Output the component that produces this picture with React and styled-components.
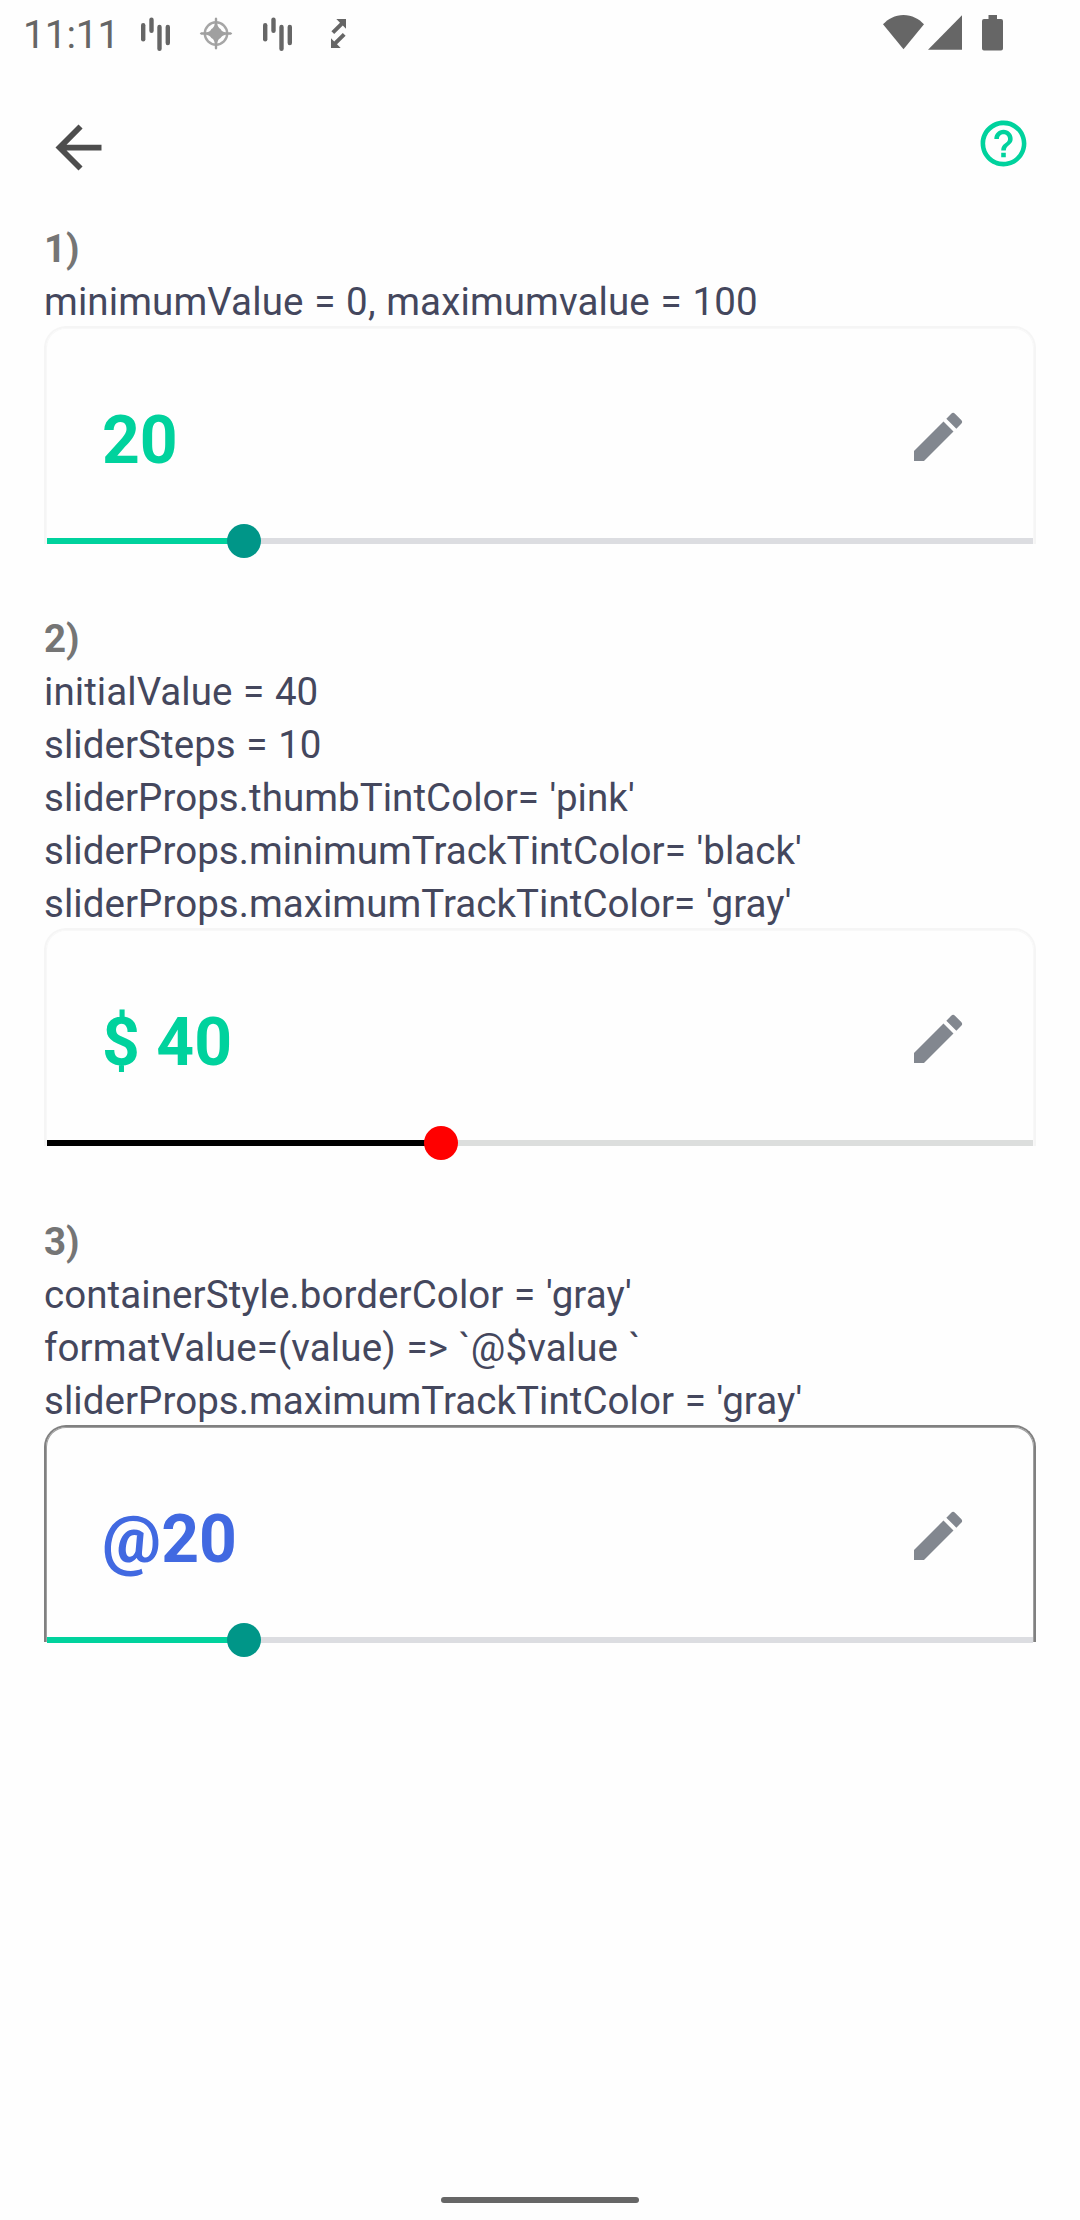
import React from "react";
import styled, { createGlobalStyle } from "styled-components";

const GlobalStyle = createGlobalStyle`
  * { box-sizing: border-box; }
  body { margin: 0; background: #fefefe; }
`;

const Screen = styled.div`
  width: 1080px;
  height: 2220px;
  display: flex;
  flex-direction: column;
  background: #fefefe;
  font-family: Roboto, "Liberation Sans", sans-serif;
  overflow: hidden;
`;

const StatusBar = styled.div`
  height: 68px;
  display: flex;
  justify-content: space-between;
  padding: 0 76px 0 22px;
`;

const StatusGroup = styled.div`
  display: flex;
  align-items: flex-start;
`;

const Clock = styled.span`
  width: 118px;
  padding-top: 11px;
  font-size: 39.4px;
  line-height: 48px;
  letter-spacing: -0.35px;
  text-indent: 1px;
  color: #666;
`;

const Glyph = styled.svg`
  display: block;
  flex: none;
  width: ${(p) => p.$w}px;
  height: ${(p) => p.$h || p.$w}px;
  margin-top: ${(p) => p.$top || 0}px;
  margin-left: ${(p) => p.$left || 0}px;
  fill: ${(p) => p.$color || "#666"};
`;

const Header = styled.header`
  height: 154px;
  display: flex;
  justify-content: space-between;
  padding: 45px 49px 0 44px;
`;

const HeaderButton = styled.button`
  display: flex;
  align-items: flex-start;
  height: 72px;
  padding: ${(p) => p.$top || 0}px 0 0;
  border: 0;
  background: none;
`;

const Content = styled.main`
  flex: 1;
  display: flex;
  flex-direction: column;
  padding: 0 44px;
`;

const Section = styled.section`
  display: flex;
  flex-direction: column;
  margin-bottom: ${(p) => p.$gap}px;
`;

const Heading = styled.div`
  font-size: 38.5px;
  line-height: 53px;
  font-weight: 700;
  color: #757575;
`;

const Line = styled.div`
  font-size: 38.5px;
  line-height: 53px;
  letter-spacing: ${(p) => p.$tracking}px;
  word-spacing: 1px;
  color: #44475d;
  white-space: pre;
`;

const Card = styled.div`
  position: relative;
  height: 218px;
  margin-top: -2px;
  display: flex;
  flex-direction: column;
`;

const CardBody = styled.div`
  height: ${(p) => p.$height}px;
  flex: none;
  display: flex;
  justify-content: space-between;
  padding: 75px 64px 0 56px;
  border: 2px solid ${(p) => p.$border};
  border-bottom: 0;
  border-radius: 22px 22px 0 0;
  box-shadow: inset 0 0 0 1px ${(p) => p.$edge};
`;

const Value = styled.div`
  font-size: 66px;
  line-height: 76px;
  font-weight: 700;
  color: ${(p) => p.$color};
`;

const Track = styled.div`
  position: absolute;
  left: 3px;
  right: 3px;
  bottom: 0;
  height: 6px;
  background: ${(p) => p.$color};
`;

const Fill = styled.div`
  width: ${(p) => p.$percent}%;
  height: 6px;
  background: ${(p) => p.$color};
`;

const Thumb = styled.div`
  position: absolute;
  left: calc(${(p) => p.$percent}% - 17px);
  top: -14px;
  width: 34px;
  height: 34px;
  border-radius: 50%;
  background: ${(p) => p.$color};
`;

const HomeArea = styled.footer`
  height: 23px;
  display: flex;
  justify-content: center;
`;

const HomeBar = styled.div`
  width: 198px;
  height: 6px;
  border-radius: 3px;
  background: #666;
`;

const Bars = ({ left }) => (
  <Glyph $w={30} $h={68} $left={left} viewBox="0 0 30 68">
    <rect x="1" y="23" width="4.4" height="18.5" rx="2.2" />
    <rect x="9.3" y="17.5" width="4.4" height="15.5" rx="2.2" />
    <rect x="17.3" y="24.8" width="4.4" height="26.2" rx="2.2" />
    <rect x="25.6" y="24.8" width="4.4" height="20.4" rx="2.2" />
  </Glyph>
);

const Compass = () => (
  <Glyph $w={34} $h={68} $left={29} $color="#a0a0a0" viewBox="0 0 34 68">
    <circle cx="17" cy="33.5" r="11.2" fill="none" stroke="#a6a6a6" strokeWidth="2.4" />
    <path
      d="M17 17.2L18.2 18.6V23.5Q19 28 21.6 28.9Q22.500 31.500 27 32.3H31.9L33.300 33.5L31.9 34.7H27Q22.500 35.500 21.6 38.1Q19 39 18.2 43.5V48.4L17 49.8L15.8 48.4V43.5Q15 39 12.4 38.1Q11.500 35.500 7 34.7H2.100L.7 33.5L2.100 32.300H7Q11.500 31.500 12.4 28.9Q15 28 15.8 23.5V18.6Z"
    />
  </Glyph>
);

const Exchange = () => (
  <Glyph $w={18} $h={68} $left={38} viewBox="0 0 18 68">
    <path d="M6.3 19H16v9.7L12.8 25.5L4.2 34.1L1.4 31.3L10 22.7Z" />
    <path d="M10.7 48H1V38.3L4.2 41.5L12.8 32.9L15.6 35.7L7 44.3Z" />
  </Glyph>
);

const PencilIcon = () => (
  <Glyph $w={64} $top={2} $color="#82878f" viewBox="0 0 24 24">
    <path d="M3 17.25V21h3.75L17.81 9.94l-3.75-3.75L3 17.25zM20.71 7.04a.996.996 0 0 0 0-1.41l-2.34-2.34a.996.996 0 0 0-1.41 0l-1.83 1.83 3.75 3.75 1.83-1.83z" />
  </Glyph>
);

const SliderCard = ({ value, percent, color, border, edge, bodyHeight = 218, fill, thumb, track }) => (
  <Card>
    <CardBody $border={border} $edge={edge} $height={bodyHeight}>
      <Value $color={color}>{value}</Value>
      <PencilIcon />
    </CardBody>
    <Track $color={track}>
      <Fill $percent={percent} $color={fill} />
      <Thumb $percent={percent} $color={thumb} />
    </Track>
  </Card>
);

const examples = [
  {
    title: "1)",
    gap: 68,
    lines: [{ text: "minimumValue = 0, maximumvalue = 100", tracking: 0.12 }],
    card: {
      value: "20", percent: 20, color: "#00d29d", border: "#f5f5f5", edge: "#f8f8f8",
      fill: "#00d29d", thumb: "#009688", track: "#dcdde1",
    },
  },
  {
    title: "2)",
    gap: 69,
    lines: [
      { text: "initialValue = 40" },
      { text: "sliderSteps = 10" },
      { text: "sliderProps.thumbTintColor= 'pink'" },
      { text: "sliderProps.minimumTrackTintColor= 'black'" },
      { text: "sliderProps.maximumTrackTintColor= 'gray'" },
    ],
    card: {
      value: "$ 40", percent: 40, color: "#00d29d", border: "#f5f5f5", edge: "#f8f8f8",
      fill: "#000", thumb: "#f00", track: "#dcdedd",
    },
  },
  {
    title: "3)",
    gap: 0,
    lines: [
      { text: "containerStyle.borderColor = 'gray'", tracking: 0.08 },
      { text: "formatValue=(value) => `@$value `", tracking: 0.13 },
      { text: "sliderProps.maximumTrackTintColor = 'gray'" },
    ],
    card: {
      value: "@20", percent: 20, color: "#4169e1", border: "#808080", edge: "#a0a0a0",
      bodyHeight: 217, fill: "#00d29d", thumb: "#009688", track: "#dcdde1",
    },
  },
];

export default function App() {
  return (
    <>
      <GlobalStyle />
      <Screen>
        <StatusBar>
          <StatusGroup>
            <Clock>11:11</Clock>
            <Bars left={0} />
            <Compass />
            <Bars left={29} />
            <Exchange />
          </StatusGroup>
          <StatusGroup>
            <Glyph $w={42} $h={68} viewBox="0 0 42 68">
              <path d="M0 24.3C5 19 12 15 20.5 15S36 19 41 24.3L20.5 49.3Z" />
            </Glyph>
            <Glyph $w={35} $h={68} $left={3} viewBox="0 0 35 68">
              <path d="M0 49.7H34V15.3Z" />
            </Glyph>
            <Glyph $w={22} $h={68} $left={19} viewBox="0 0 22 68">
              <path d="M6.5 15h8.5v4h4q2 0 2 2v27.5q0 2-2 2H2q-2 0-2-2V21q0-2 2-2h4.5z" />
            </Glyph>
          </StatusGroup>
        </StatusBar>
        <Header>
          <HeaderButton aria-label="Back">
            <Glyph $w={69} $color="#4d4d4d" viewBox="0 0 24 24">
              <path d="M20 11H7.83l5.59-5.59L12 4l-8 8 8 8 1.41-1.41L7.83 13H20v-2z" />
            </Glyph>
          </HeaderButton>
          <HeaderButton $top={3} aria-label="Help">
            <Glyph $w={55} $color="#00d29d" viewBox="0 0 24 24">
              <path d="M11 18h2v-2h-2v2zm1-16C6.48 2 2 6.48 2 12s4.48 10 10 10 10-4.48 10-10S17.52 2 12 2zm0 18c-4.41 0-8-3.59-8-8s3.59-8 8-8 8 3.59 8 8-3.59 8-8 8zm0-14c-2.21 0-4 1.79-4 4h2c0-1.1.9-2 2-2s2 .9 2 2c0 2-3 1.75-3 5h2c0-2.25 3-2.5 3-5 0-2.21-1.79-4-4-4z" />
            </Glyph>
          </HeaderButton>
        </Header>
        <Content>
          {examples.map((item) => (
            <Section key={item.title} $gap={item.gap}>
              <Heading>{item.title}</Heading>
              {item.lines.map(({ text, tracking = 0.055 }) => (
                <Line key={text} $tracking={tracking}>{text}</Line>
              ))}
              <SliderCard {...item.card} />
            </Section>
          ))}
        </Content>
        <HomeArea>
          <HomeBar />
        </HomeArea>
      </Screen>
    </>
  );
}
